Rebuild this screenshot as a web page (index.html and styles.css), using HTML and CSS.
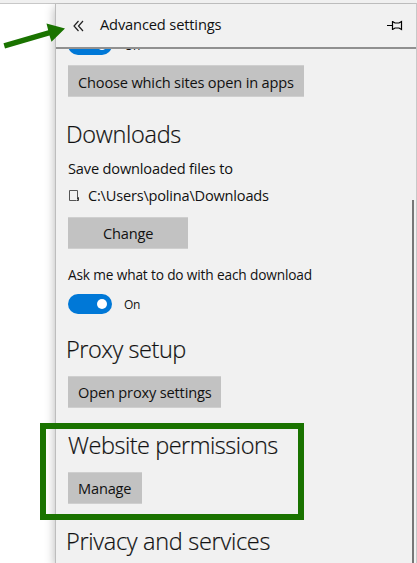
FILE: index.html
```html
<!DOCTYPE html>
<html lang="en">
<head>
<meta charset="utf-8">
<title>Advanced settings</title>
<link rel="stylesheet" href="styles.css">
</head>
<body>
<div class="page">
  <aside class="panel">
    <header class="panel-header">
      <svg class="back" width="12" height="12" viewBox="0 0 12 12"><path d="M5.500 1 1 6l4.500 5M10 1 5.500 6l4.500 5"/></svg>
      <h1>Advanced settings</h1>
      <svg class="pin" width="17" height="11" viewBox="0 0 17 11"><path d="M1 5.500h5M6.500 1v9M6.500 1.500 9 3h4l2.500-1.500v8L13 8H9L6.500 9.500"/></svg>
    </header>
    <main class="settings">
      <div class="toggle-row"><span class="toggle"></span><span class="state">On</span></div>
      <button class="b-sites">Choose which sites open in apps</button>
      <h2>Downloads</h2>
      <p class="save">Save downloaded files to</p>
      <p class="path"><svg width="12" height="13" viewBox="0 0 12 13"><path d="M1.500 1.500h8v7M1.500 1.500v10H8"/><path class="fold" d="M8.500 11.500h2v-3h-1v2"/></svg><span>C:\Users\polina\Downloads</span></p>
      <button class="b-change">Change</button>
      <p class="ask">Ask me what to do with each download</p>
      <div class="toggle-row"><span class="toggle"></span><span class="state">On</span></div>
      <h2 class="h-proxy">Proxy setup</h2>
      <button class="b-proxy">Open proxy settings</button>
      <h2 class="h-website">Website permissions</h2>
      <button class="b-manage">Manage</button>
      <h2>Privacy and services</h2>
    </main>
    <div class="scrollbar"></div>
  </aside>
  <svg class="arrow" width="66" height="54" viewBox="0 0 66 54"><path d="M3.500 43.300 48.200 30.200 46.500 23.500 65 28.500 51.500 41.800 49.500 35.500 5 48.500Z"/></svg>
  <div class="highlight"></div>
</div>
</body>
</html>
```
FILE: styles.css
```css
* { box-sizing: border-box; }
body { margin: 0; background: #fff; color: #111; font-family: "Open Sans", "Noto Sans", sans-serif; font-size: 14.6px; letter-spacing: -0.17px; }
h1, h2, p { margin: 0; white-space: nowrap; }
.page { position: relative; width: 417px; height: 563px; overflow: hidden; border-top: 3px solid #f0f0f0; }
.page::before { content: ""; display: block; height: 1px; background: #c8c8c8; }
.panel { position: relative; margin-left: 55px; height: 559px; display: flex; flex-direction: column; background: #f1f1f1; border-left: 1px solid #bdbdbd; border-right: 1px solid #c8c8c8; box-shadow: -1px 3px 9px rgba(0,0,0,.25); }
.panel-header { height: 45px; flex: none; display: flex; align-items: center; border-bottom: 2px solid #909090; padding: 0 13px 0 17px; }
.back, .pin, .path svg { fill: none; stroke: #222; stroke-width: 1; }
.back { margin-top: 1px; stroke-width: 1.2; }
h1 { font-size: 14.700px; font-weight: 400; line-height: 20px; margin: 0 0 3px 15px; }
.pin { margin-left: auto; stroke: #000; stroke-width: 1.2; }
.settings { flex: 1; min-height: 0; overflow: hidden; display: flex; flex-direction: column; align-items: flex-start; padding-left: 12px; }
.settings > * { flex: none; }
.toggle-row { height: 20px; display: flex; align-items: center; margin-top: 9px; }
.toggle-row:first-child { margin-top: -14px; }
.toggle { width: 44px; height: 20px; border-radius: 10px; background: #0078d7; display: flex; align-items: center; justify-content: flex-end; padding-right: 5px; }
.toggle::before { content: ""; width: 10px; height: 10px; border-radius: 50%; background: #fff; }
.state { margin-left: 12px; margin-top: 1px; font-size: 12px; letter-spacing: -0.4px; }
button { height: 32px; border: 1px solid #cfcfcf; border-width: 1px 0; border-radius: 0; background: #c2c2c2; color: #111; font: inherit; letter-spacing: inherit; line-height: 20px; padding: 0 0 0 10px; text-align: left; white-space: nowrap; margin-top: 9px; }
.b-sites { width: 236px; margin-top: 10px; padding-top: 1px; }
.b-change { width: 120px; margin-top: 12px; padding-left: 35px; }
.b-proxy { width: 153px; }
.b-manage { width: 74px; }
h2 { height: 36px; line-height: 36px; font-size: 23.500px; font-weight: 300; letter-spacing: -0.3px; -webkit-text-stroke: 0.2px #111; margin: 19px 0 0 -2px; }
.h-proxy { margin-top: 17px; letter-spacing: -0.45px; }
.h-website { margin-left: 0; letter-spacing: -0.48px; }
p { height: 20px; line-height: 20px; }
.save { margin-top: 6px; }
.path { margin-top: 7px; display: flex; align-items: center; gap: 8px; }
.path span { letter-spacing: -0.21px; }
.path svg { stroke: #555; }
.path .fold { stroke: #333; }
.ask { margin-top: 16px; font-size: 13.700px; letter-spacing: -0.16px; }
.scrollbar { position: absolute; right: 2px; top: 196px; width: 2px; bottom: 0; background: #777; }
.arrow { position: absolute; left: 0; top: -3px; fill: #1a7300; }
.highlight { position: absolute; left: 40px; top: 420px; width: 264px; height: 97px; border: 6px solid #1a7300; }
```
